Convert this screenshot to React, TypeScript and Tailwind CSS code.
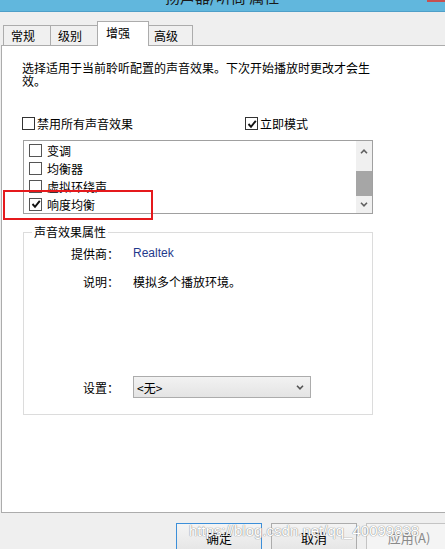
import React from 'react';

const Tick = () => (
  <svg width="10" height="10" viewBox="0 0 10 10" className="block">
    <path d="M1.5 5 L4 7.8 L8.8 1.8" fill="none" stroke="#111" strokeWidth="1.9" />
  </svg>
);

const CheckBox: React.FC<{ checked?: boolean; light?: boolean }> = ({ checked, light }) => (
  <span
    className={
      light
        ? 'flex h-[13px] w-[13px] shrink-0 items-center justify-center border border-[#555] bg-white'
        : 'flex h-[13px] w-[13px] shrink-0 items-center justify-center border border-[#333] bg-white'
    }
  >
    {checked && <Tick />}
  </span>
);

const Chevron: React.FC<{ up?: boolean; color?: string }> = ({ up, color = '#606060' }) => (
  <svg width="8" height="5" viewBox="0 0 8 5" className="block">
    <path d={up ? 'M1 4.2 L4 1.2 L7 4.2' : 'M1 0.8 L4 3.8 L7 0.8'} fill="none" stroke={color} strokeWidth="1.6" />
  </svg>
);

const effects = [
  { name: '变调', checked: false },
  { name: '均衡器', checked: false },
  { name: '虚拟环绕声', checked: false },
  { name: '响度均衡', checked: true },
];

const App: React.FC = () => {
  return (
    <div className="relative h-[549px] w-[445px] overflow-hidden bg-[#efefef] font-['Noto_Sans_CJK_SC','Noto_Sans',sans-serif] text-[12px] leading-[13px] text-black">
      {/* title bar, mostly scrolled off */}
      <div className="flex h-[12px] justify-between overflow-hidden border-b border-[#4f9fc8] bg-[#61b7dd]">
        <div className="-mt-[13px] pl-[165px] text-[15px] leading-[20px] text-[#1a1a1a]">扬声器/听筒 属性</div>
        <div className="h-[2px] w-[18px] bg-[#c75050]" />
      </div>

      {/* tabs */}
      <div className="flex h-[33px] items-end pl-[3px]">
        <div className="flex h-[20px] w-[48px] items-center border border-b-0 border-[#acacac] bg-[#f0f0f0] pl-[7px]">常规</div>
        <div className="-ml-px flex h-[20px] w-[48px] items-center border border-b-0 border-[#acacac] bg-[#f0f0f0] pl-[7px]">级别</div>
        <div className="relative z-10 -mb-px -ml-px flex h-[25px] w-[52px] items-start border border-b-0 border-[#acacac] bg-white pl-[8px] pt-[4px]">
          增强
        </div>
        <div className="-ml-px flex h-[20px] w-[45px] items-center border border-b-0 border-[#acacac] bg-[#f0f0f0] pl-[5px]">高级</div>
      </div>

      {/* tab page */}
      <div className="ml-px h-[468px] border-y border-l border-[#acacac] bg-white pl-[20px] pt-[15px]">
        <p className="w-[352px]">选择适用于当前聆听配置的声音效果。下次开始播放时更改才会生效。</p>

        <div className="mt-[30px] flex h-[13px] items-center">
          <div className="flex w-[223px] items-center gap-[2px]">
            <CheckBox />
            <span>禁用所有声音效果</span>
          </div>
          <div className="flex items-center gap-[2px]">
            <CheckBox checked />
            <span>立即模式</span>
          </div>
        </div>

        {/* effect list */}
        <div className="ml-px mt-[10px] flex h-[74px] w-[350px] border border-[#a0a0a0] bg-white">
          <div className="flex-1">
            {effects.map((e) => (
              <div key={e.name} className="flex h-[18px] items-center gap-[4px] pl-[5px]">
                <CheckBox checked={e.checked} light />
                <span className="pl-px">{e.name}</span>
              </div>
            ))}
          </div>
          <div className="flex w-[16px] flex-col bg-[#f0f0f0]">
            <div className="flex h-[20px] items-center justify-center">
              <Chevron up />
            </div>
            <div className="mt-[10px] h-[25px] bg-[#a6a6a6]" />
            <div className="flex flex-1 items-center justify-center">
              <Chevron />
            </div>
          </div>
        </div>

        {/* properties group */}
        <div className="relative ml-px mt-[18px] h-[183px] w-[350px] border border-[#dcdcdc]">
          <span className="absolute -top-[8px] left-[8px] bg-white px-[2px]">声音效果属性</span>
          <div className="flex flex-col pt-[14px]">
            <div className="flex items-center">
              <span className="w-[95px] text-right">提供商：</span>
              <span className="pl-[14px] font-['Liberation_Sans',sans-serif] text-[12px] text-[#1f3a8c]">Realtek</span>
            </div>
            <div className="mt-[15px] flex items-center">
              <span className="w-[95px] text-right">说明：</span>
              <span className="pl-[14px]">模拟多个播放环境。</span>
            </div>
            <div className="mt-[88px] flex items-center">
              <span className="w-[95px] text-right">设置：</span>
              <div className="ml-[14px] flex h-[22px] w-[178px] items-center justify-between border border-[#acacac] bg-gradient-to-b from-[#f2f2f2] to-[#e4e4e4] pl-[3px] pr-[6px]">
                <span>&lt;无&gt;</span>
                <Chevron color="#555" />
              </div>
            </div>
          </div>
        </div>
      </div>

      {/* dialog buttons */}
      <div className="flex gap-[9px] pl-[176px] pt-[10px]">
        <div className="flex h-[28px] w-[86px] shrink-0 items-center justify-center border border-[#3c8fd9] bg-gradient-to-b from-[#f4f4f4] to-[#e6e6e6] text-[13px]">
          确定
        </div>
        <div className="flex h-[28px] w-[86px] shrink-0 items-center justify-center border border-[#acacac] bg-gradient-to-b from-[#f4f4f4] to-[#e6e6e6] text-[13px]">
          取消
        </div>
        <div className="flex h-[28px] w-[86px] shrink-0 items-center justify-center border border-[#c4c4c4] bg-[#f4f4f4] text-[13px] text-[#8a8a8a]">
          应用(A)
        </div>
      </div>

      {/* red annotation */}
      <div className="absolute left-[3px] top-[190px] h-[30px] w-[150px] border-2 border-[#e5191c]" />

      {/* watermark */}
      <div className="pointer-events-none absolute left-[189px] top-[522px] font-['Liberation_Sans',sans-serif] text-[15px] leading-[18px] text-white [text-shadow:0_0_1px_#8a8a8a,0_0_1px_#8a8a8a]">
        https://blog.csdn.net/qq_40099838
      </div>
    </div>
  );
};

export default App;
